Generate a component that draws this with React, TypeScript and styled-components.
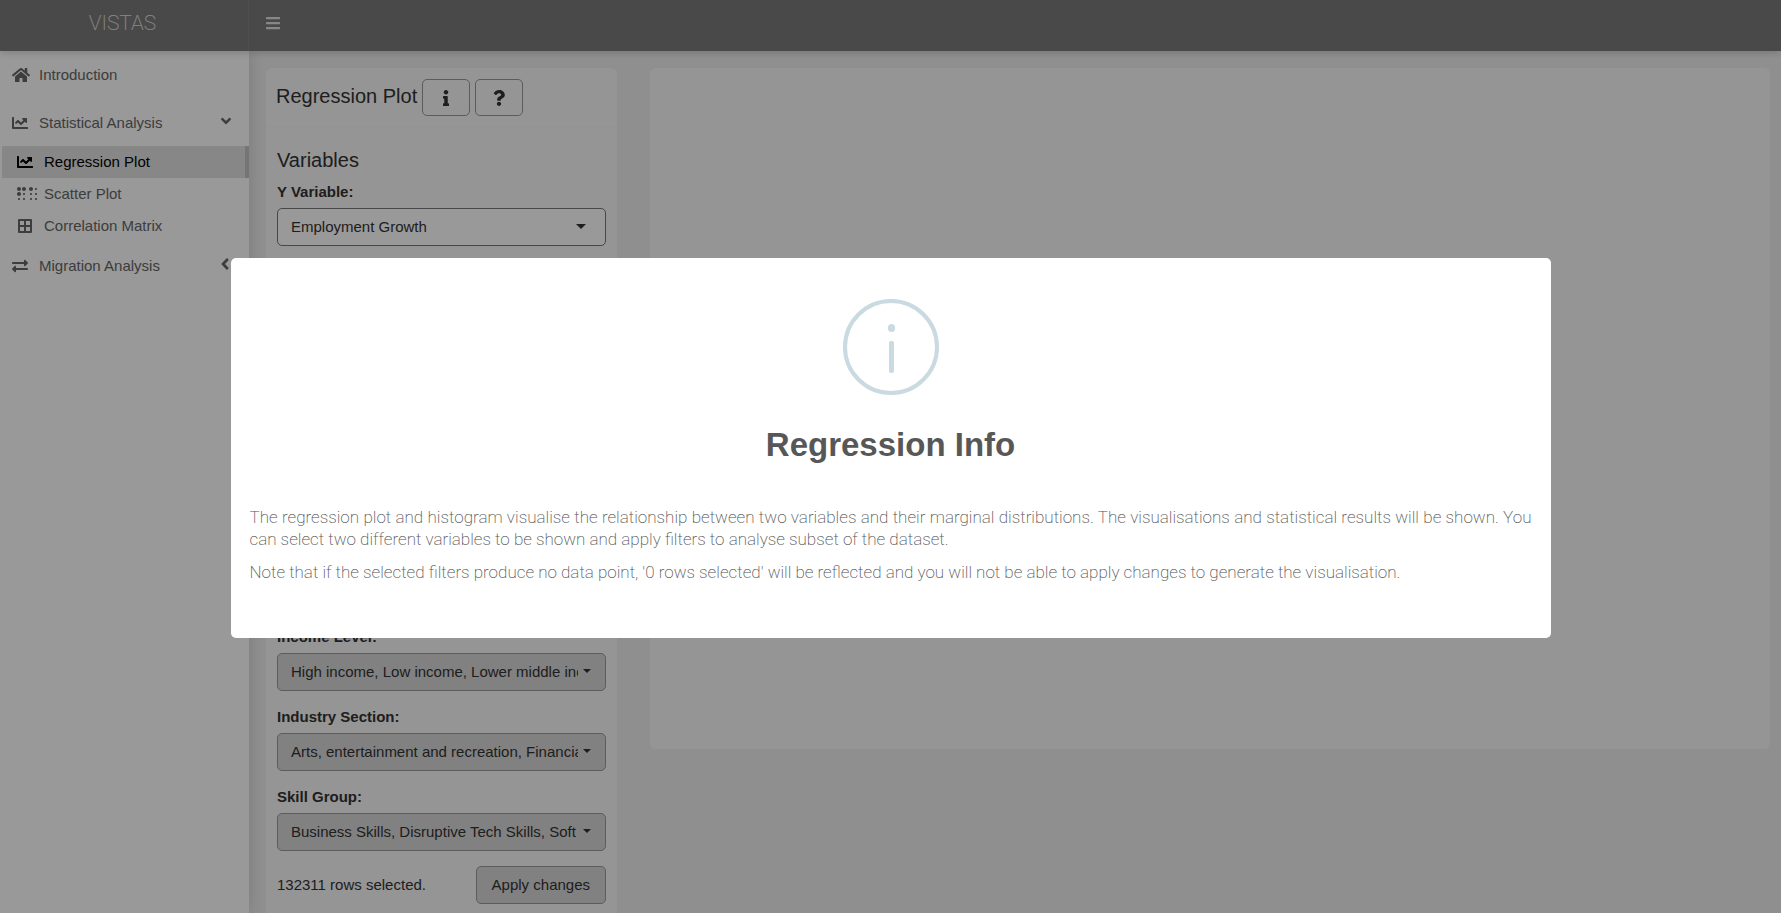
import React from 'react';
import styled, { createGlobalStyle } from 'styled-components';
import {
  FaAngleDown,
  FaAngleLeft,
  FaBars,
  FaBorderAll,
  FaBraille,
  FaChartLine,
  FaExchangeAlt,
  FaHome,
  FaInfo,
  FaQuestion,
} from 'react-icons/fa';

const GlobalStyle = createGlobalStyle`
  * { box-sizing: border-box; }
  body {
    margin: 0;
    overflow: hidden;
    font-family: "Liberation Sans", Arial, sans-serif;
    font-size: 15px;
    line-height: 22px;
    color: #333;
    background: #efefef;
  }
  button, select { font: inherit; color: inherit; margin: 0; }
  h1, h2, p, ul { margin: 0; padding: 0; font-weight: inherit; }
`;

const Page = styled.div`
  display: flex;
  flex-direction: column;
  height: 100vh;
`;

const Header = styled.header`
  position: relative;
  z-index: 2;
  display: flex;
  flex: 0 0 51px;
  background: #7b7b7b;
  color: #e2e2e2;
  box-shadow: 0 1px 8px rgba(0, 0, 0, 0.2);
`;

const Brand = styled.a`
  display: flex;
  flex: 0 0 249px;
  justify-content: center;
  padding: 12px 3px 0 0;
  border-right: 1px solid #828282;
  font-family: Roboto, sans-serif;
  font-size: 21px;
  font-weight: 200;
  color: inherit;
  text-decoration: none;
`;

const MenuToggle = styled.button`
  display: flex;
  align-items: center;
  padding: 0 16px 5px;
  border: 0;
  background: none;
  font-size: 16px;
`;

const Columns = styled.div`
  display: flex;
  flex: 1;
  min-height: 0;
`;

const Sidebar = styled.nav`
  position: relative;
  z-index: 1;
  flex: 0 0 249px;
  padding-top: 8px;
  background: #fff;
  box-shadow: 0 0 16px rgba(0, 0, 0, 0.15);
`;

const NavList = styled.ul`
  list-style: none;
`;

const NavLink = styled.a`
  display: flex;
  align-items: center;
  height: 32px;
  margin-bottom: 16px;
  padding: 0 15px 0 12px;
  color: #666;
  text-decoration: none;
`;

const NavIcon = styled.span`
  display: flex;
  flex: 0 0 27px;
`;

const NavLabel = styled.span`
  flex: 1;
`;

const Arrow = styled.span`
  display: flex;
  padding-bottom: 5px;
`;

const SubList = styled.ul`
  list-style: none;
  margin: -9px 0 8px 2px;
`;

const SubLink = styled.a<{ $active?: boolean }>`
  display: flex;
  align-items: center;
  height: 32px;
  padding-left: 15px;
  border-right: 4px solid ${(p) => (p.$active ? '#c4c4c4' : 'transparent')};
  background: ${(p) => (p.$active ? '#e2e2e2' : 'none')};
  color: ${(p) => (p.$active ? '#000' : '#666')};
  text-decoration: none;
`;

const SubIcon = styled.span`
  display: flex;
  flex: 0 0 27px;
`;

const Content = styled.main`
  display: flex;
  flex: 1;
  align-items: flex-start;
  gap: 33px;
  min-width: 0;
  padding: 17px 11px 0 17px;
`;

const Card = styled.section`
  border-radius: 6px;
  background: #f8f8f8;
`;

const ControlCard = styled(Card)`
  flex: 0 0 351px;
`;

const PlotCard = styled(Card)`
  flex: 1;
  height: 681px;
`;

const CardHeader = styled.div`
  display: flex;
  align-items: center;
  gap: 5px;
  padding: 11px 11px 11px 10px;
  border-bottom: 1px solid #f5f5f5;
`;

const CardTitle = styled.h1`
  margin-bottom: 4px;
  font-size: 20px;
  line-height: 24px;
`;

const IconButton = styled.button`
  display: flex;
  align-items: center;
  justify-content: center;
  width: 48px;
  height: 37px;
  border: 1px solid #999;
  border-radius: 5px;
  background: #f8f8f8;
  font-size: 16px;
`;

const CardBody = styled.div`
  padding: 20px 11px 24px;
`;

const SectionTitle = styled.h2`
  margin-bottom: 9px;
  font-size: 20px;
  line-height: 24px;
`;

const Field = styled.div`
  margin-bottom: 15px;
`;

const Label = styled.label`
  display: block;
  margin-bottom: 5px;
  font-weight: 700;
`;

const SelectFrame = styled.div`
  position: relative;
`;

const Select = styled.select<{ $filled?: boolean }>`
  display: block;
  width: 100%;
  height: 38px;
  padding: 0 27px 0 13px;
  appearance: none;
  overflow: hidden;
  border: 1px solid ${(p) => (p.$filled ? '#999' : '#777')};
  border-radius: 5px;
  background: ${(p) => (p.$filled ? '#d7d7d7' : '#fff')};
`;

const Caret = styled.span<{ $wide?: boolean }>`
  position: absolute;
  top: 16px;
  right: ${(p) => (p.$wide ? 20 : 15)}px;
  border: solid transparent;
  border-width: ${(p) => (p.$wide ? '5px 5px 0' : '4px 4px 0')};
  border-top-color: #333;
  pointer-events: none;
`;

const Filters = styled.div`
  margin-top: 380px;
`;

const ApplyRow = styled.div`
  display: flex;
  align-items: center;
  justify-content: space-between;
`;

const ApplyButton = styled.button`
  height: 38px;
  padding: 0 15px;
  border: 1px solid #999;
  border-radius: 5px;
  background: #d7d7d7;
`;

const Overlay = styled.div`
  position: fixed;
  inset: 0;
  z-index: 10;
  display: flex;
  align-items: center;
  justify-content: center;
  padding-bottom: 17px;
  background: rgba(0, 0, 0, 0.4);
`;

const Dialog = styled.div`
  display: flex;
  flex-direction: column;
  align-items: center;
  width: 90%;
  max-width: 1320px;
  padding: 41px 19px 55px;
  border-radius: 5px;
  background: #fff;
`;

const DialogTitle = styled.h2`
  margin: 30px 0 41px;
  font-size: 33px;
  font-weight: 700;
  line-height: 40px;
  color: #575757;
`;

const DialogText = styled.div`
  display: flex;
  flex-direction: column;
  gap: 11px;
  width: 100%;
  font-family: Roboto, sans-serif;
  font-size: 17px;
  font-weight: 200;
  color: #545454;
  text-align: justify;
`;

const InfoMark = () => (
  <svg width="96" height="96" viewBox="0 0 96 96" aria-hidden="true">
    <circle cx="48" cy="48" r="46" fill="none" stroke="#c9dae1" strokeWidth="4" />
    <rect x="45" y="25" width="7" height="8" rx="3.5" fill="#c9dae1" />
    <rect x="46" y="42" width="5" height="32" rx="2" fill="#c9dae1" />
  </svg>
);

const filters = [
  { id: 'income', label: 'Income Level:', value: 'High income, Low income, Lower middle income' },
  { id: 'industry', label: 'Industry Section:', value: 'Arts, entertainment and recreation, Financial' },
  { id: 'skill', label: 'Skill Group:', value: 'Business Skills, Disruptive Tech Skills, Soft Skills' },
];

export default function App() {
  return (
    <>
      <GlobalStyle />
      <Page>
        <Header>
          <Brand href="#">VISTAS</Brand>
          <MenuToggle aria-label="Toggle navigation">
            <FaBars />
          </MenuToggle>
        </Header>
        <Columns>
          <Sidebar>
            <NavList>
              <li>
                <NavLink href="#introduction">
                  <NavIcon>
                    <FaHome size={18} />
                  </NavIcon>
                  <NavLabel>Introduction</NavLabel>
                </NavLink>
              </li>
              <li>
                <NavLink href="#statistical">
                  <NavIcon>
                    <FaChartLine size={16} />
                  </NavIcon>
                  <NavLabel>Statistical Analysis</NavLabel>
                  <Arrow>
                    <FaAngleDown size={16} />
                  </Arrow>
                </NavLink>
                <SubList>
                  <li>
                    <SubLink href="#regression" $active>
                      <SubIcon>
                        <FaChartLine size={16} />
                      </SubIcon>
                      Regression Plot
                    </SubLink>
                  </li>
                  <li>
                    <SubLink href="#scatter">
                      <SubIcon>
                        <FaBraille size={20} />
                      </SubIcon>
                      Scatter Plot
                    </SubLink>
                  </li>
                  <li>
                    <SubLink href="#correlation">
                      <SubIcon>
                        <FaBorderAll size={16} />
                      </SubIcon>
                      Correlation Matrix
                    </SubLink>
                  </li>
                </SubList>
              </li>
              <li>
                <NavLink href="#migration">
                  <NavIcon>
                    <FaExchangeAlt size={16} />
                  </NavIcon>
                  <NavLabel>Migration Analysis</NavLabel>
                  <Arrow>
                    <FaAngleLeft size={18} />
                  </Arrow>
                </NavLink>
              </li>
            </NavList>
          </Sidebar>
          <Content>
            <ControlCard>
              <CardHeader>
                <CardTitle>Regression Plot</CardTitle>
                <IconButton aria-label="About this plot">
                  <FaInfo />
                </IconButton>
                <IconButton aria-label="Help">
                  <FaQuestion />
                </IconButton>
              </CardHeader>
              <CardBody>
                <SectionTitle>Variables</SectionTitle>
                <Label htmlFor="y-variable">Y Variable:</Label>
                <SelectFrame>
                  <Select id="y-variable">
                    <option>Employment Growth</option>
                  </Select>
                  <Caret $wide />
                </SelectFrame>
                <Filters>
                  {filters.map((f) => (
                    <Field key={f.id}>
                      <Label htmlFor={f.id}>{f.label}</Label>
                      <SelectFrame>
                        <Select id={f.id} $filled>
                          <option>{f.value}</option>
                        </Select>
                        <Caret />
                      </SelectFrame>
                    </Field>
                  ))}
                </Filters>
                <ApplyRow>
                  <span>132311 rows selected.</span>
                  <ApplyButton>Apply changes</ApplyButton>
                </ApplyRow>
              </CardBody>
            </ControlCard>
            <PlotCard />
          </Content>
        </Columns>
      </Page>
      <Overlay>
        <Dialog role="dialog" aria-modal="true" aria-labelledby="dialog-title">
          <InfoMark />
          <DialogTitle id="dialog-title">Regression Info</DialogTitle>
          <DialogText>
            <p>
              The regression plot and histogram visualise the relationship between two variables and
              their marginal distributions. The visualisations and statistical results will be
              shown. You can select two different variables to be shown and apply filters to analyse
              subset of the dataset.
            </p>
            <p>
              Note that if the selected filters produce no data point, '0 rows selected' will be
              reflected and you will not be able to apply changes to generate the visualisation.
            </p>
          </DialogText>
        </Dialog>
      </Overlay>
    </>
  );
}
